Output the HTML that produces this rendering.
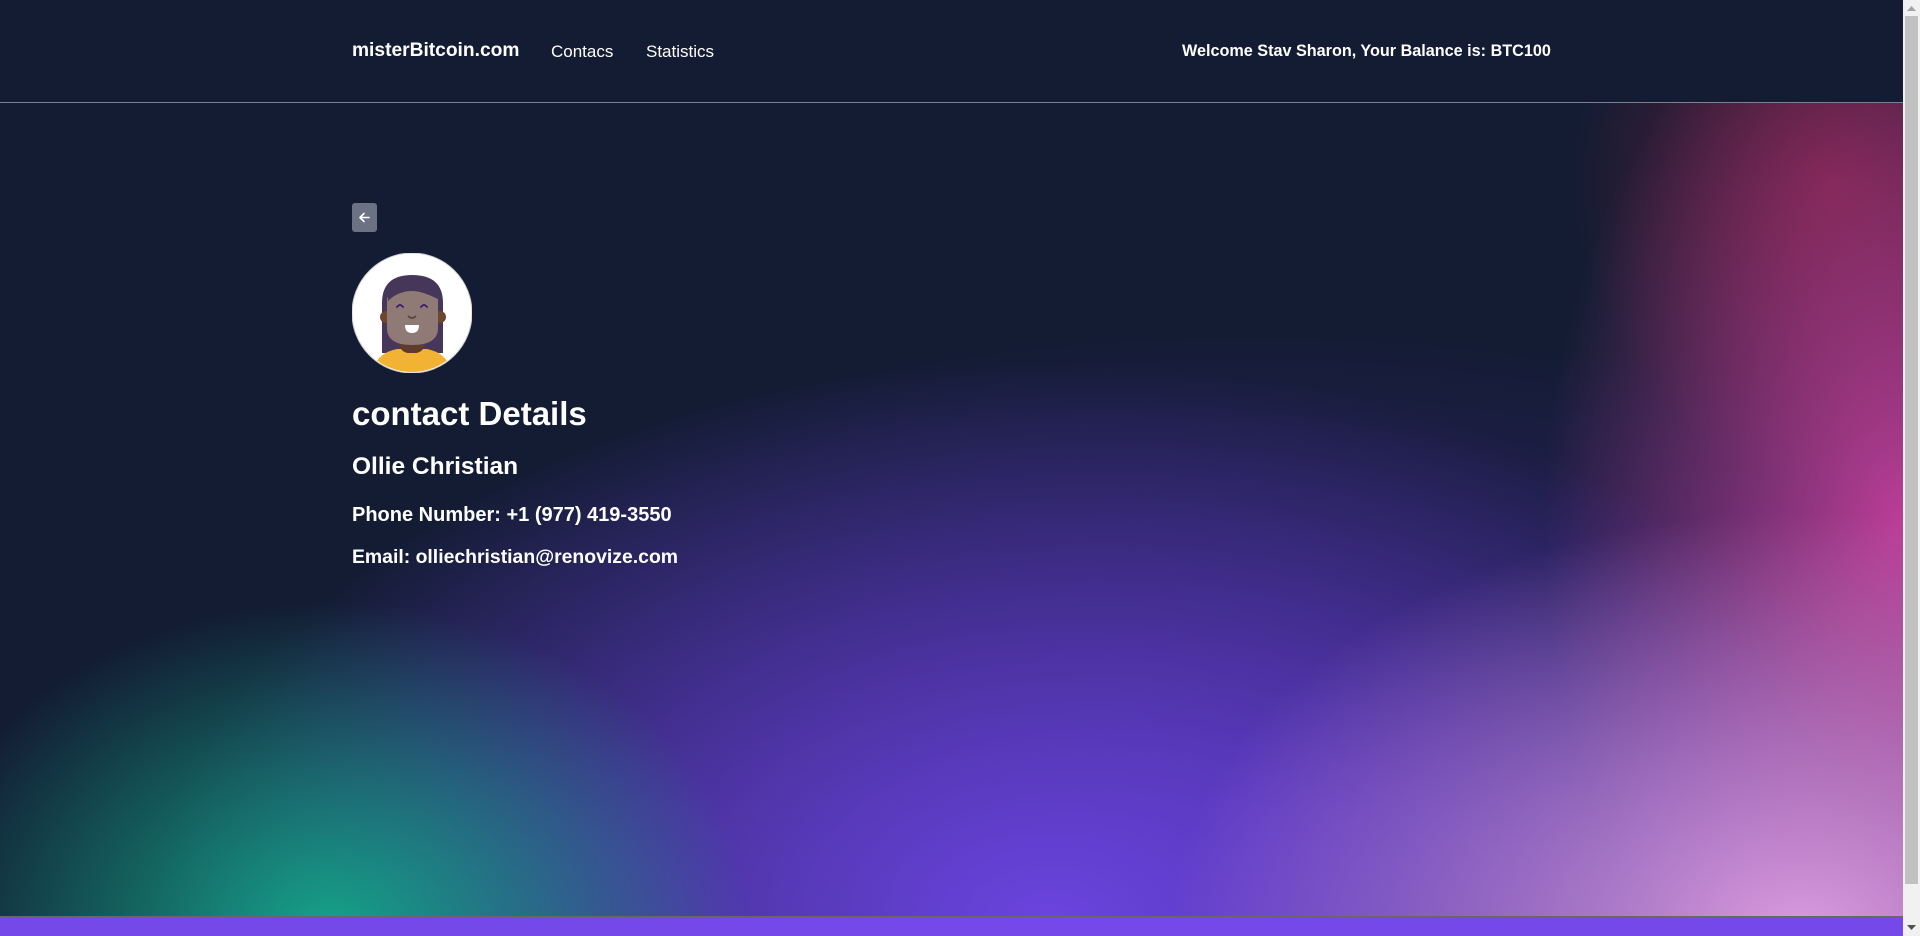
<!DOCTYPE html>
<html><head><meta charset="utf-8"><style>
*{margin:0;padding:0;box-sizing:border-box}
html,body{width:1920px;height:936px;overflow:hidden}
body{font-family:"Liberation Sans",Arial,sans-serif;color:#fff;background:#131c33;position:relative}
.bg{position:absolute;left:0;top:102px;width:1903px;height:814px;background:
radial-gradient(ellipse 420px 330px at 330px 830px,rgba(20,170,140,.95),rgba(20,170,140,0) 100%),
radial-gradient(ellipse 900px 600px at 1800px 830px,rgba(225,160,230,.95),rgba(225,160,230,0) 70%),
radial-gradient(ellipse 900px 560px at 1050px 820px,rgba(110,70,230,.95),rgba(110,70,230,0) 100%),
radial-gradient(ellipse 360px 560px at 1903px 420px,rgba(205,65,160,.9),rgba(205,65,160,0) 100%),
radial-gradient(ellipse 260px 300px at 1830px 80px,rgba(120,30,60,.8),rgba(120,30,60,0) 100%),
radial-gradient(ellipse 1000px 480px at 1250px 700px,rgba(60,35,130,.9),rgba(60,35,130,0) 100%),
#131c33}
.hdr{position:absolute;left:0;top:0;width:1903px;height:103px;background:#131c33;border-bottom:1px solid #7a8196}
.t{position:absolute;white-space:nowrap;font-weight:bold;line-height:1}
.bottom{position:absolute;left:0;top:916px;width:1903px;height:20px;background:#7548ea;border-top:1px solid #666}
.sb{position:absolute;left:1903px;top:0;width:17px;height:936px;background:#f1f1f1}
.thumb{position:absolute;left:1905px;top:16px;width:13px;height:868px;background:#c1c1c1}
</style></head><body>
<div class="bg"></div>
<div class="hdr"></div>
<div class="t" style="left:352px;top:41px;font-size:19.2px">misterBitcoin.com</div>
<div class="t" style="left:551px;top:43px;font-size:17px;font-weight:normal">Contacs</div>
<div class="t" style="left:646px;top:43px;font-size:17px;font-weight:normal">Statistics</div>
<div class="t" style="left:1182px;top:43px;font-size:16.2px">Welcome Stav Sharon, Your Balance is: BTC100</div>

<div style="position:absolute;left:352px;top:203px;width:25px;height:29px;background:#6b7284;border-radius:3px"></div>
<svg style="position:absolute;left:352px;top:203px" width="25" height="29" viewBox="0 0 25 29"><path d="M8 14.5h9M12 10.5l-4 4 4 4" stroke="#fff" stroke-width="1.6" fill="none" stroke-linecap="round" stroke-linejoin="round"/></svg>

<svg style="position:absolute;left:352px;top:253px" width="120" height="120" viewBox="0 0 120 120">
<defs><clipPath id="c"><circle cx="60" cy="60" r="59"/></clipPath></defs>
<circle cx="60" cy="60" r="60" fill="#fff" stroke="#ccc" stroke-width="1"/>
<g clip-path="url(#c)">
<path d="M30 50Q30 22 60 22Q91 22 91 50V100H30Z" fill="#46375a"/>
<path d="M20 120Q24 100 45 96H75Q96 100 100 120Z" fill="#f2b233"/>
<rect x="47" y="80" width="26" height="20" rx="10" fill="#5e3b2c"/>
<circle cx="34" cy="64" r="6" fill="#6e4630"/><circle cx="88" cy="64" r="6" fill="#6e4630"/>
<path d="M35 45Q48 40 60 36Q74 40 86 46V75Q86 92 60 92Q35 92 35 75Z" fill="#8f7a76"/>
<path d="M36 42Q50 30 60 30Q80 32 86 46Q70 38 60 38Q46 38 36 48Z" fill="#46375a"/>
<path d="M45 54q3-4 6 0M69 54q3-4 6 0" stroke="#3b1b6b" stroke-width="1.8" fill="none" stroke-linecap="round"/>
<path d="M56 63q4 4 8 0" stroke="#5a4340" stroke-width="1.6" fill="none"/>
<path d="M53 72h14q0 8-7 8q-7 0-7-8Z" fill="#fff"/>
</g></svg>

<div class="t" style="left:352px;top:397px;font-size:33px">contact Details</div>
<div class="t" style="left:352px;top:455px;font-size:24.5px">Ollie Christian</div>
<div class="t" style="left:352px;top:505px;font-size:20px">Phone Number: +1 (977) 419-3550</div>
<div class="t" style="left:352px;top:548px;font-size:19.4px">Email: olliechristian@renovize.com</div>

<div class="bottom"></div>
<div class="sb"></div><div class="thumb"></div>
<svg style="position:absolute;left:1905px;top:3px" width="13" height="10"><path d="M2 8L6.5 3L11 8Z" fill="#a3a3a3"/></svg>
<svg style="position:absolute;left:1905px;top:922px" width="13" height="10"><path d="M2 3L6.5 8L11 3Z" fill="#505050"/></svg>
</body></html>
